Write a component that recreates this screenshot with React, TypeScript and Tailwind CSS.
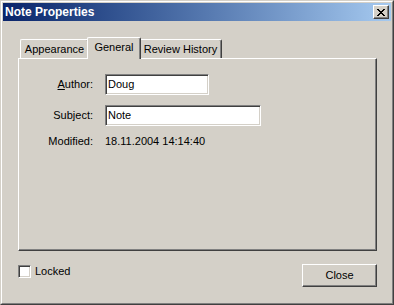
import React, { useState } from 'react';

// Classic Win2k 3D edge styles
const raised =
  'border border-t-white border-l-white border-r-[#404040] border-b-[#404040] shadow-[inset_-1px_-1px_0_#808080]';
const sunken =
  'border border-t-[#808080] border-l-[#808080] border-r-white border-b-white shadow-[inset_1px_1px_0_#404040,inset_-1px_-1px_0_#d4d0c8]';

function CloseGlyph() {
  // 8x7 pixel X, like the Marlett close glyph
  const rows = [0, 1, 2, 3, 4, 5, 6];
  return (
    <svg width="8" height="7" viewBox="0 0 8 7" shapeRendering="crispEdges">
      {rows.map(r => (
        <g key={r}>
          <rect x={r < 4 ? r : 6 - r} y={r} width="2" height="1" fill="#000" />
          <rect x={r < 4 ? 6 - r : r} y={r} width="2" height="1" fill="#000" />
        </g>
      ))}
    </svg>
  );
}

function Tab({ label, active, width }: { label: string; active?: boolean; width: string }) {
  if (active) {
    return (
      <div
        className={`${width} h-[22px] -mb-px -mx-[2px] relative z-10 bg-[#d4d0c8] border-t border-l border-r border-t-white border-l-white border-r-[#404040] shadow-[inset_-1px_0_0_#808080] rounded-t-[2px] flex items-start justify-center pt-[3px]`}
      >
        {label}
      </div>
    );
  }
  return (
    <div
      className={`${width} h-[19px] bg-[#d4d0c8] border-t border-l border-r border-t-white border-l-white border-r-[#404040] shadow-[inset_-1px_0_0_#808080] rounded-t-[2px] flex items-start justify-center pt-[3px]`}
    >
      {label}
    </div>
  );
}

export default function App() {
  const [locked, setLocked] = useState(false);

  return (
    <div className="w-[394px] h-[305px] bg-[#d4d0c8] border border-t-[#d4d0c8] border-l-[#d4d0c8] border-r-[#404040] border-b-[#404040] font-['Liberation_Sans',Arial,sans-serif] text-[11px] leading-[13px] text-black select-none">
      <div className="h-full border border-t-white border-l-white border-r-[#808080] border-b-[#808080] p-px flex flex-col">
        {/* Title bar */}
        <div className="h-[18px] flex items-center justify-between bg-gradient-to-r from-[#0a246a] to-[#a6caf0] pl-[2px] pr-[2px]">
          <span className="text-white font-bold text-[12px]">Note Properties</span>
          <button className={`${raised} w-[16px] h-[14px] bg-[#d4d0c8] flex items-center justify-center`}>
            <CloseGlyph />
          </button>
        </div>

        {/* Body */}
        <div className="flex-1 flex flex-col pl-[15px] pr-[14px] pt-[16px]">
          {/* Tab strip */}
          <div className="h-[21px] flex items-end pl-[2px]">
            <Tab label="Appearance" width="w-[69px]" />
            <Tab label="General" width="w-[54px]" active />
            <Tab label="Review History" width="w-[83px]" />
          </div>

          {/* Panel */}
          <div className="h-[193px] border border-t-white border-l-white border-r-[#404040] border-b-[#404040] shadow-[inset_-1px_-1px_0_#808080] pt-[15px]">
            <div className="flex items-center h-[21px]">
              <span className="w-[74px] text-right">
                <span className="underline">A</span>uthor:
              </span>
              <div className={`${sunken} ml-[12px] w-[104px] h-[21px] bg-white pl-[2px] flex items-center`}>Doug</div>
            </div>
            <div className="flex items-center h-[21px] mt-[10px]">
              <span className="w-[74px] text-right">Subject:</span>
              <div className={`${sunken} ml-[12px] w-[156px] h-[21px] bg-white pl-[2px] flex items-center`}>Note</div>
            </div>
            <div className="flex items-center h-[13px] mt-[9px]">
              <span className="w-[74px] text-right">Modified:</span>
              <span className="ml-[12px]">18.11.2004 14:14:40</span>
            </div>
          </div>

          {/* Footer row */}
          <div className="flex items-start justify-between mt-[13px]">
            <label className="flex items-center mt-px" onClick={() => setLocked(!locked)}>
              <span className={`${sunken} w-[13px] h-[13px] bg-white flex items-center justify-center`}>
                {locked && <span className="text-[9px] leading-none">✓</span>}
              </span>
              <span className="ml-[4px]">Locked</span>
            </label>
            <button className={`${raised} w-[75px] h-[23px] bg-[#d4d0c8] flex items-center justify-center`}>Close</button>
          </div>
        </div>
      </div>
    </div>
  );
}
